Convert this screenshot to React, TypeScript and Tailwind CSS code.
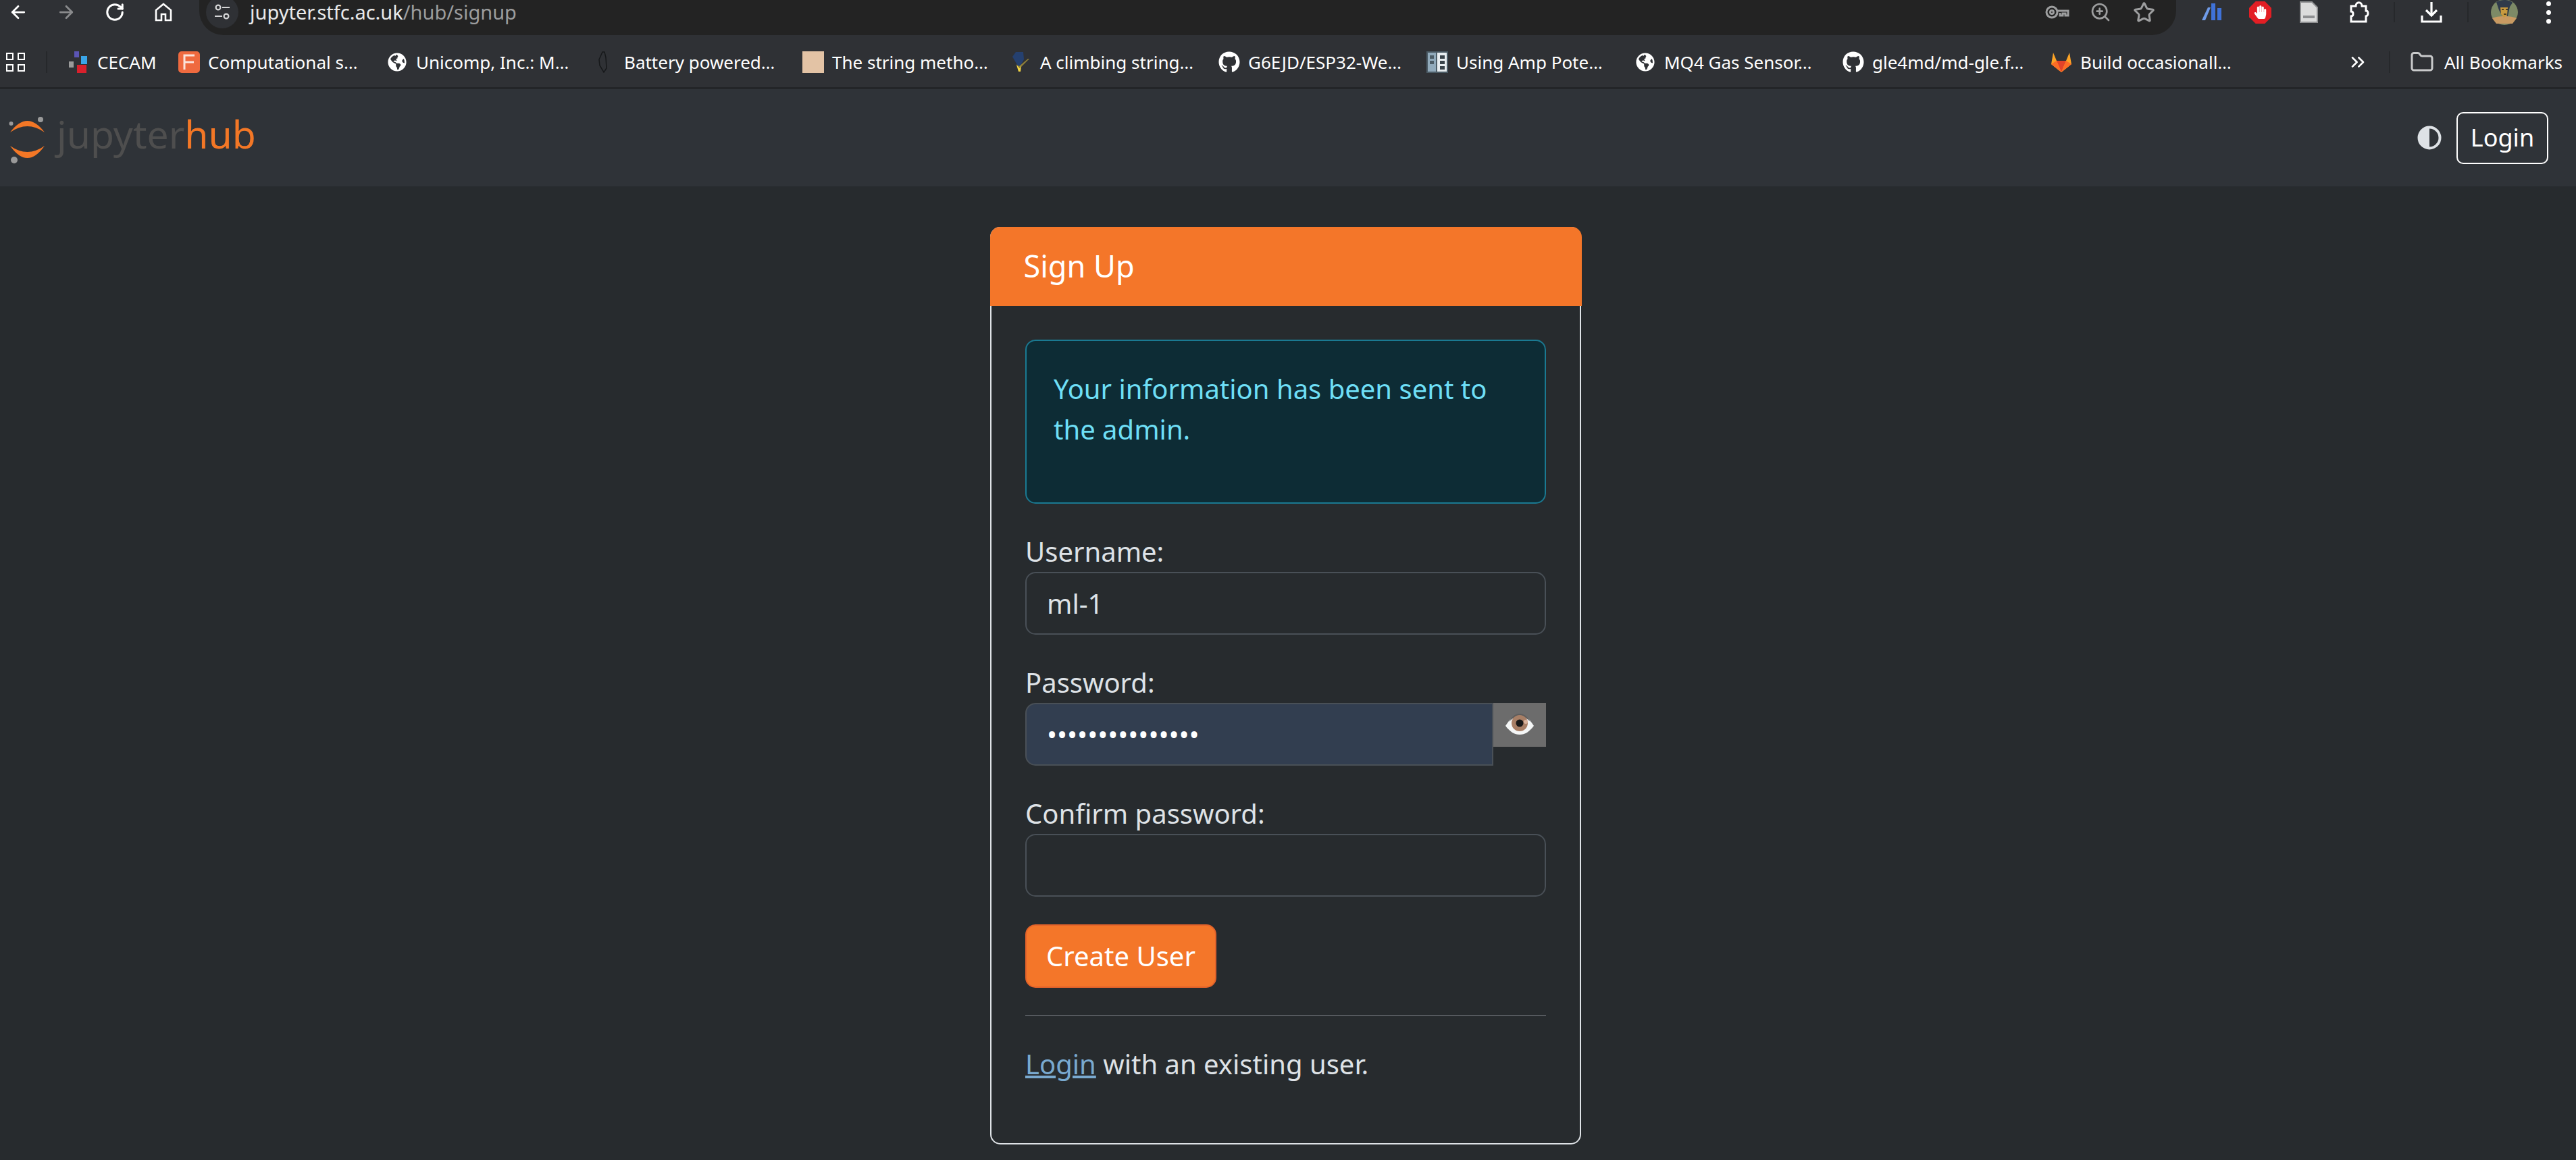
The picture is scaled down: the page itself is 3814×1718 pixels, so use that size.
import { ArrowLeft, ArrowRight, RotateCw, Star, ZoomIn, Folder, ChevronsRight } from "lucide-react";
import { FaGithub, FaGlobeAmericas, FaHandPaper } from "react-icons/fa";
import type { ReactNode } from "react";

function Globe() {
  return <FaGlobeAmericas className="h-[28px] w-[28px] text-white" />;
}

function Github() {
  return <FaGithub className="h-[32px] w-[32px] text-white" />;
}

const bookmarks: { label: string; width: string; icon: ReactNode }[] = [
  {
    label: "CECAM",
    width: "w-[164px]",
    icon: (
      <svg viewBox="0 0 32 32" className="h-[32px] w-[32px]">
        <rect x="10" y="0" width="7" height="9" fill="#5b55b5" />
        <rect x="20" y="7" width="9" height="12" fill="#3aa5e8" />
        <rect x="2" y="15" width="7" height="9" fill="#9a9a9a" />
        <rect x="14" y="20" width="14" height="12" fill="#d8202c" />
      </svg>
    ),
  },
  {
    label: "Computational s…",
    width: "w-[308px]",
    icon: (
      <svg viewBox="0 0 32 32" className="h-[32px] w-[32px]">
        <rect width="32" height="32" rx="5" fill="#ef6a3f" />
        <path d="M9 27V6h15M9 16h14" stroke="#fbe3da" strokeWidth="3" fill="none" />
      </svg>
    ),
  },
  { label: "Unicomp, Inc.: M…", width: "w-[308px]", icon: <Globe /> },
  {
    label: "Battery powered…",
    width: "w-[308px]",
    icon: (
      <svg viewBox="0 0 32 32" className="h-[32px] w-[32px]">
        <path d="M12 1 7 12l1 9 6 10 4-6-1-16-2-8z" fill="none" stroke="#16181a" strokeWidth="1.5" />
      </svg>
    ),
  },
  {
    label: "The string metho…",
    width: "w-[308px]",
    icon: <div className="h-[32px] w-[32px] bg-[#e3c3a5]" />,
  },
  {
    label: "A climbing string…",
    width: "w-[308px]",
    icon: (
      <svg viewBox="0 0 32 32" className="h-[32px] w-[32px]">
        <path d="M3 8 8 1h11l1 11-7 13z" fill="#25406f" />
        <path d="M14 25 28 11l-2 0-13 11-5-3z" fill="#8f7f3a" />
        <path d="m9 20 5 5 2-4-1 9h-3z" fill="#f2d544" />
      </svg>
    ),
  },
  { label: "G6EJD/ESP32-We…", width: "w-[308px]", icon: <Github /> },
  {
    label: "Using Amp Pote…",
    width: "w-[308px]",
    icon: (
      <svg viewBox="0 0 32 32" className="h-[32px] w-[32px]">
        <rect width="32" height="32" fill="#4c5c66" />
        <rect x="2" y="2" width="12" height="28" fill="#91aabb" />
        <rect x="16" y="2" width="14" height="28" fill="#e8edf0" />
        <rect x="5" y="6" width="6" height="5" fill="#4c5c66" />
        <rect x="5" y="14" width="6" height="5" fill="#4c5c66" />
        <rect x="20" y="6" width="7" height="5" fill="#39434a" />
        <rect x="20" y="14" width="7" height="5" fill="#39434a" />
        <rect x="20" y="22" width="7" height="5" fill="#39434a" />
      </svg>
    ),
  },
  { label: "MQ4 Gas Sensor…", width: "w-[308px]", icon: <Globe /> },
  { label: "gle4md/md-gle.f…", width: "w-[308px]", icon: <Github /> },
  {
    label: "Build occasionall…",
    width: "w-[308px]",
    icon: (
      <svg viewBox="0 0 32 32" className="h-[32px] w-[32px]">
        <path d="m16 31 15-12-3-17-5 12H9L4 2 1 19z" fill="#fca326" />
        <path d="M16 31 9 14h14z" fill="#e24329" />
        <path d="m16 31-15-12 8-5zM16 31l15-12-8-5z" fill="#fc6d26" />
      </svg>
    ),
  },
];

function ToolbarLeft() {
  return (
    <div className="flex h-full w-[295px] shrink-0 items-center pb-[16px] pl-[12px] text-white">
      <ArrowLeft className="h-[30px] w-[30px]" strokeWidth={2.2} />
      <ArrowRight className="ml-[41px] h-[30px] w-[30px] text-[#8a8b8d]" strokeWidth={2.2} />
      <RotateCw className="ml-[42px] h-[30px] w-[30px]" strokeWidth={2.4} />
      <svg viewBox="0 0 26 28" className="ml-[44px] h-[28px] w-[26px]" fill="none" stroke="white" strokeWidth="2.6">
        <path d="M2 26V11L13 2l11 9v15h-8v-9h-6v9z" />
      </svg>
    </div>
  );
}

function UrlBar() {
  return (
    <div className="flex h-full w-[2927px] shrink-0 items-center rounded-b-[36px] bg-[#232323] pb-[4px] pl-[10px]">
      <div className="-mt-[12px] flex h-[48px] w-[48px] items-center justify-center rounded-full bg-[#2f3135]">
        <svg viewBox="0 0 24 26" className="h-[26px] w-[24px]" fill="none" stroke="#d5d6d7" strokeWidth="2.2">
          <circle cx="6" cy="6" r="3.4" />
          <path d="M12 6h11M1 19h11" />
          <circle cx="18" cy="19" r="3.4" />
        </svg>
      </div>
      <div className="ml-[17px] -mt-[12px] text-[29px] leading-[36px] text-[#e8e9ea]">
        jupyter.stfc.ac.uk<span className="text-[#9c9d9e]">/hub/signup</span>
      </div>
      <div className="ml-auto -mt-[12px] flex items-center pr-[31px] text-[#9d9e9f]">
        <svg viewBox="0 0 36 20" className="h-[20px] w-[36px]" fill="none" stroke="currentColor" strokeWidth="3">
          <circle cx="10" cy="10" r="8" />
          <circle cx="10" cy="10" r="2.5" />
          <path d="M18 8h16v7h-4v-3h-4v3h-4v-4" />
        </svg>
        <ZoomIn className="ml-[30px] h-[32px] w-[32px]" strokeWidth={2} />
        <Star className="ml-[32px] h-[33px] w-[33px]" strokeWidth={2.2} />
      </div>
    </div>
  );
}

function ToolbarRight() {
  return (
    <div className="flex h-full min-w-0 flex-1 items-center pb-[16px] pl-[38px]">
      <svg viewBox="0 0 30 26" className="h-[26px] w-[30px]">
        <path d="M0 25 9 6h4L5 25z" fill="#6f9be8" />
        <rect x="14" y="0" width="6" height="25" fill="#3f72d8" />
        <rect x="23" y="7" width="6" height="18" fill="#3f72d8" />
      </svg>
      <svg viewBox="0 0 34 34" className="ml-[40px] h-[33px] w-[33px]">
        <path d="M10 0h14l10 10v14L24 34H10L0 24V10z" fill="#e31e24" />
      </svg>
      <FaHandPaper className="-ml-[26px] h-[20px] w-[19px] text-white" />
      <svg viewBox="0 0 27 32" className="ml-[49px] h-[32px] w-[27px]">
        <path d="M1 1h17l8 8v22H1z" fill="#dcdcdc" stroke="#8f9092" strokeWidth="2" />
        <rect x="5" y="21" width="17" height="4" fill="#8f9092" />
      </svg>
      <svg viewBox="0 0 32 32" className="ml-[45px] h-[32px] w-[32px]" fill="none" stroke="white" strokeWidth="3">
        <path d="M4 7h7c0-7 9-7 9 0h6v7c4 0 4 7 0 8v8H4v-8c4 0 4-7 0-7z" />
      </svg>
      <div className="ml-[35px] h-[30px] w-[2px] bg-[#26282b]" />
      <svg viewBox="0 0 32 32" className="ml-[38px] h-[32px] w-[32px]" fill="none" stroke="white" strokeWidth="3.2">
        <path d="M16 1v20M8 13l8 8 8-8M2 21v9h28v-9" />
      </svg>
      <div className="ml-[37px] h-[30px] w-[2px] bg-[#26282b]" />
      <svg viewBox="0 0 40 38" className="ml-[33px] h-[38px] w-[40px] shrink-0">
        <ellipse cx="20" cy="19" rx="20" ry="19" fill="#7d8a66" />
        <path d="M2 28c8-4 28-4 36 0l-6 8H8z" fill="#c99a62" />
        <path d="M8 4c6-4 20-4 24 1l-4 6-3 14h-8l-5-9z" fill="#2f3a4a" />
        <path d="M14 12h11l-1 12-5 3-4-5z" fill="#c99a3e" />
        <path d="M16 15h3M22 15h3M19 22h4" stroke="#2a2318" strokeWidth="1.6" />
      </svg>
      <div className="ml-[42px] flex flex-col gap-[6px]">
        <div className="h-[7px] w-[7px] rounded-full bg-white" />
        <div className="h-[7px] w-[7px] rounded-full bg-white" />
        <div className="h-[7px] w-[7px] rounded-full bg-white" />
      </div>
    </div>
  );
}

function BookmarksBar() {
  return (
    <div className="flex h-[80px] items-center border-b-[3px] border-[#232528] bg-[#2f3135] pl-[9px] pt-[3px] text-[26px] text-white">
      <div className="grid w-[28px] shrink-0 grid-cols-2 gap-[6px]">
        <div className="h-[11px] w-[11px] border-[2.5px] border-white" />
        <div className="h-[11px] w-[11px] border-[2.5px] border-white" />
        <div className="h-[11px] w-[11px] border-[2.5px] border-white" />
        <div className="h-[11px] w-[11px] border-[2.5px] border-white" />
      </div>
      <div className="ml-[31px] mr-[30px] h-[32px] w-[2px] shrink-0 bg-[#26282b]" />
      {bookmarks.map((b) => (
        <div key={b.label} className={"flex shrink-0 items-center gap-[12px] " + b.width}>
          <div className="flex h-[32px] w-[32px] shrink-0 items-center justify-center">{b.icon}</div>
          <span className="whitespace-nowrap">{b.label}</span>
        </div>
      ))}
      <ChevronsRight className="ml-[131px] h-[32px] w-[32px] shrink-0" strokeWidth={2} />
      <div className="ml-[30px] h-[32px] w-[2px] shrink-0 bg-[#26282b]" />
      <Folder className="ml-[29px] h-[36px] w-[36px] shrink-0 text-[#c9cacb]" strokeWidth={2} />
      <span className="ml-[15px] whitespace-nowrap">All Bookmarks</span>
    </div>
  );
}

function Logo() {
  return (
    <div className="flex items-center pl-[15px]">
      <svg viewBox="0 0 56 68" className="h-[68px] w-[56px] shrink-0 overflow-visible">
        <path d="M0 26Q25.5-8 51 26 25.5 8 0 26z" fill="#f37726" />
        <path d="M0 46Q25.5 82 51 46 25.5 64 0 46z" fill="#f37726" />
        <circle cx="45" cy="7" r="4" fill="#9a9a9a" />
        <circle cx="1.5" cy="13" r="3" fill="#9a9a9a" />
        <circle cx="6" cy="67" r="5" fill="#9a9a9a" />
      </svg>
      <div className="ml-[13px] -mt-[12px] text-[57px] leading-[80px]">
        <span className="text-[#4e4e4e]">jupyter</span>
        <span className="text-[#f37726]">hub</span>
      </div>
    </div>
  );
}

function Navbar() {
  return (
    <div className="flex h-[144px] items-center justify-between bg-[#2f3338] pr-[41px]">
      <Logo />
      <div className="flex items-center gap-[22px]">
        <svg viewBox="0 0 36 36" className="h-[36px] w-[36px]">
          <circle cx="18" cy="18" r="15.5" fill="none" stroke="#dee2e6" strokeWidth="4" />
          <path d="M18 2a16 16 0 0 0 0 32z" fill="#dee2e6" />
        </svg>
        <button
          type="button"
          className="h-[77px] w-[136px] rounded-[10px] border-[2.5px] border-white text-[36px] text-white"
        >
          Login
        </button>
      </div>
    </div>
  );
}

function Field({ label, children }: { label: string; children: ReactNode }) {
  return (
    <div>
      <label className="block h-[60px] text-[40px] leading-[60px] text-[#dee2e6]">{label}</label>
      {children}
    </div>
  );
}

function Eye() {
  return (
    <svg viewBox="0 0 44 34" className="h-[34px] w-[44px]">
      <path d="M1 19C8 8 14 3 22 3s14 5 21 16c-7 9-13 13-21 13S8 28 1 19z" fill="#f4f6f6" />
      <path d="M6 13C10 6 15 1 22 1s12 5 16 12c-5-5-10-8-16-8S11 8 6 13z" fill="#5d5d5d" />
      <circle cx="22" cy="15" r="12" fill="#a87f66" />
      <circle cx="22" cy="15" r="5.5" fill="#191919" />
      <circle cx="31" cy="13" r="3" fill="#d9b29b" />
    </svg>
  );
}

function SignupCard() {
  return (
    <div className="w-[875px] rounded-[15px] border-[2.5px] border-[#dee2e6] bg-[#272b2e]">
      <div className="-mx-[2.5px] -mt-[2.5px] h-[117px] rounded-t-[15px] bg-[#f47629] px-[50px] text-[45px] leading-[115px] text-white">
        Sign Up
      </div>
      <div className="flex flex-col gap-[41px] px-[50px] pb-[87px] pt-[50px]">
        <div className="h-[243px] rounded-[15px] border-[2.5px] border-[#1a7a92] bg-[#0d2c35] px-[40px] pt-[41px] text-[40px] leading-[60px] text-[#6edff6]">
          Your information has been sent to the admin.
        </div>
        <Field label="Username:">
          <input
            readOnly
            value="ml-1"
            className="h-[93px] w-full rounded-[15px] border-[2.5px] border-[#495057] bg-[#272b2e] px-[30px] text-[40px] text-[#dee2e6] outline-none"
          />
        </Field>
        <Field label="Password:">
          <div className="flex items-start">
            <input
              readOnly
              type="password"
              value="aaaaaaaaaaaaaaa"
              className="h-[93px] min-w-0 flex-1 rounded-l-[15px] border-[2.5px] border-[#495057] bg-[#323e50] px-[30px] text-[40px] text-white outline-none"
            />
            <button type="button" className="flex h-[65px] w-[78px] shrink-0 items-center justify-center bg-[#6c6c6c]">
              <Eye />
            </button>
          </div>
        </Field>
        <Field label="Confirm password:">
          <input
            readOnly
            className="h-[93px] w-full rounded-[15px] border-[2.5px] border-[#495057] bg-[#272b2e] px-[30px] text-[40px] text-[#dee2e6] outline-none"
          />
        </Field>
        <button
          type="button"
          className="h-[94px] w-[283px] rounded-[15px] border-[2.5px] border-[#e2622a] bg-[#f47629] text-[40px] text-white"
        >
          Create User
        </button>
        <div className="-mt-[1px] flex flex-col gap-[41px]">
          <div className="h-[2.5px] bg-[#55595e]" />
          <p className="text-[40px] leading-[60px] text-[#dee2e6]">
            <a href="#login" className="text-[#79a9cf] underline">
              Login
            </a>{" "}
            with an existing user.
          </p>
        </div>
      </div>
    </div>
  );
}

export default function App() {
  return (
    <div className="h-[1718px] w-[3814px] overflow-hidden bg-[#272b2e] font-['Noto_Sans',sans-serif]">
      <div className="flex h-[52px] bg-[#2f3135]">
        <ToolbarLeft />
        <UrlBar />
        <ToolbarRight />
      </div>
      <BookmarksBar />
      <Navbar />
      <div className="flex justify-center pr-[7px] pt-[60px]">
        <SignupCard />
      </div>
    </div>
  );
}
